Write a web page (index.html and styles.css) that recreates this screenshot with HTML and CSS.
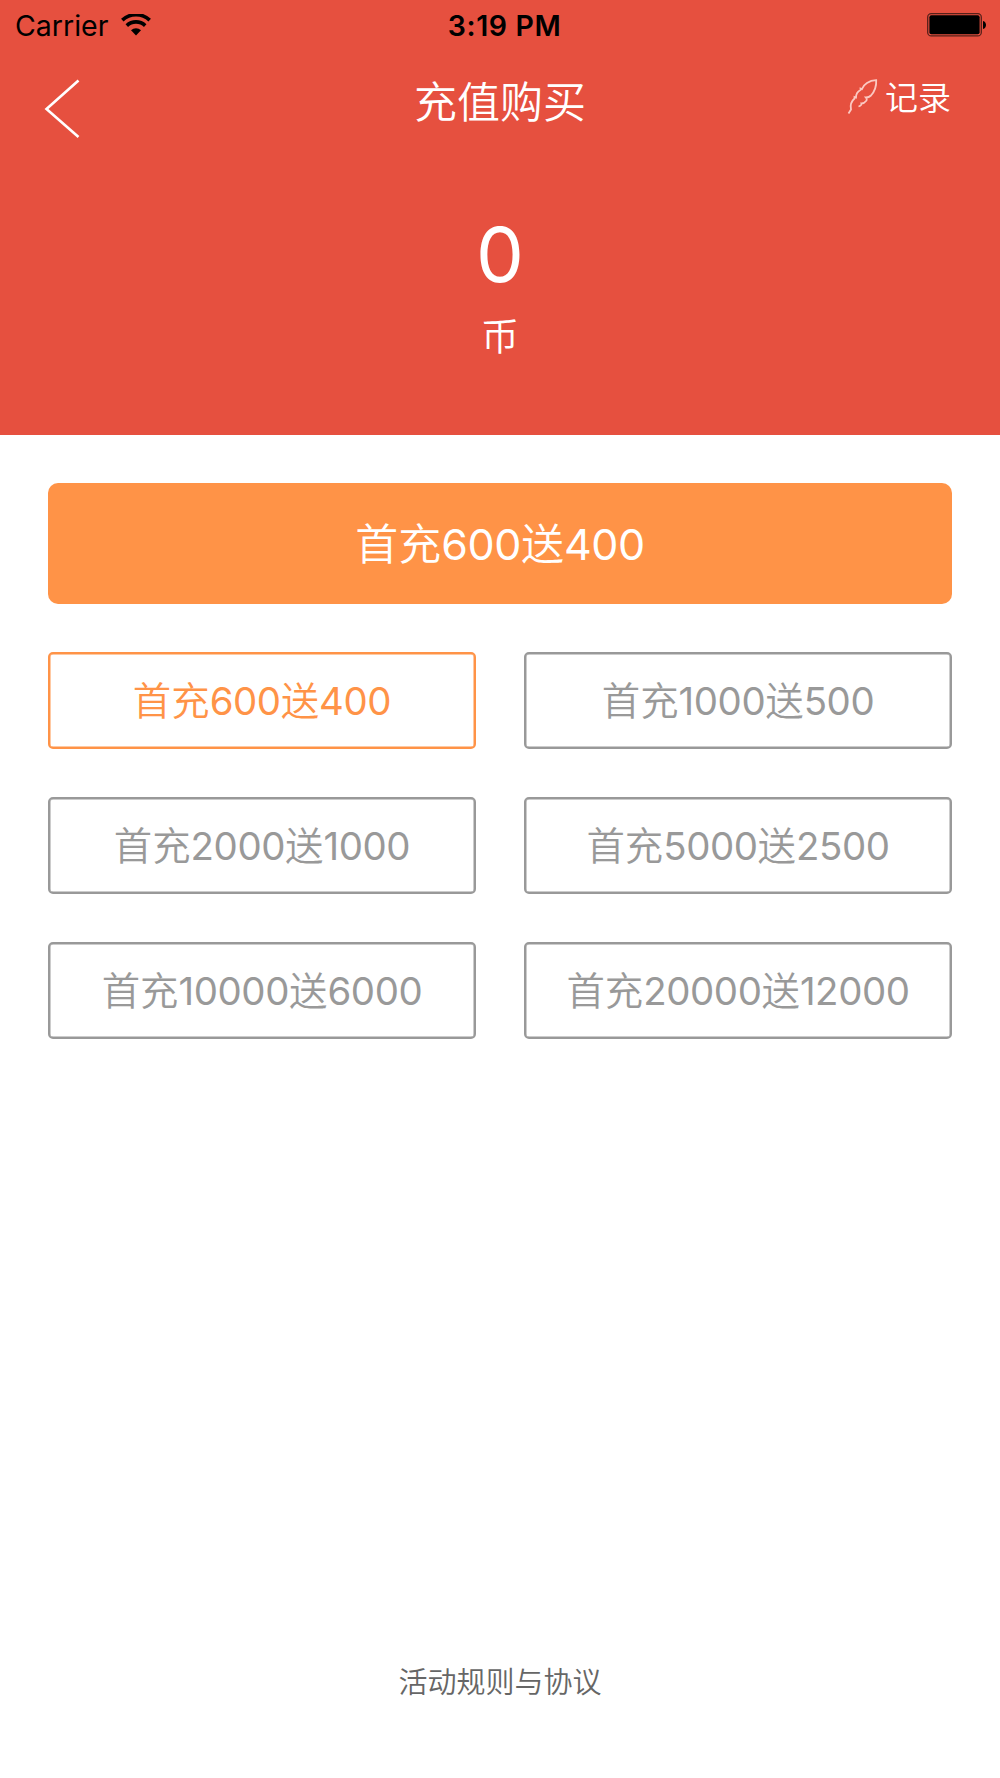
FILE: index.html
```html
<!DOCTYPE html>
<html lang="zh-CN">
<head>
  <meta charset="UTF-8">
  <meta name="viewport" content="width=device-width, initial-scale=1.0">
  <title>充值购买</title>
  <link rel="stylesheet" href="styles.css">
</head>
<body>
  <header class="header">
    <!-- Status bar -->
    <div class="status-bar">
      <div class="carrier">
        <span>Carrier</span>
        <svg class="wifi" width="30" height="22" viewBox="0 0 30 22">
          <path d="M1.3 6.1a20 20 0 0 1 27.4 0" fill="none" stroke="#000" stroke-width="3.6"/>
          <path d="M5.8 11.6a13.3 13.3 0 0 1 18.4 0" fill="none" stroke="#000" stroke-width="3.6"/>
          <path d="M10 16.2a7.2 7.2 0 0 1 10 0L15 21.4z"/>
        </svg>
      </div>
      <div class="time">3:19 PM</div>
      <svg class="battery" width="60" height="24" viewBox="0 0 60 24">
        <rect x=".7" y=".7" width="53.6" height="22.2" rx="3.5" fill="none" stroke="#56201a" stroke-width="1.3"/>
        <rect x="2.4" y="2.3" width="50.2" height="19" rx="2"/>
        <path d="M56 8c4 .8 4 7.2 0 8z"/>
      </svg>
    </div>
    <!-- Navigation -->
    <nav class="nav">
      <a class="back" href="#">
        <svg width="36" height="60" viewBox="0 0 36 60">
          <path d="M34.5 1.5L2.5 30l32 28" fill="none" stroke="#fff" stroke-width="2.6"/>
        </svg>
      </a>
      <h1 class="title">充值购买</h1>
      <a class="record" href="#">
        <svg class="feather" width="32" height="36" viewBox="0 0 32 36">
          <path d="M1.5 34.5L4 30.500C3 26 3.500 23 7.500 19.500v-1.500l1.500.5C9 15 10.500 12.500 13.500 11V9.500l1.500.5C16.500 5.500 22 1.500 29.200 1.200 29.500 7 27.500 12.500 24 16.500c-1.500 1.500-3 2-5 2 1 1 1 2 .5 3-1.500 2-3 3-5 3 .5 1-1 2.500-3 3"/>
        </svg>
        <span>记录</span>
      </a>
    </nav>
    <!-- Balance -->
    <div class="balance">0</div>
    <div class="unit">币</div>
  </header>
  <main class="content">
    <button class="pay-btn">首充<span class="num">600</span>送<span class="num">400</span></button>
    <div class="options">
      <button class="option active">首充<span class="num">600</span>送<span class="num">400</span></button>
      <button class="option">首充<span class="num">1000</span>送<span class="num">500</span></button>
      <button class="option">首充<span class="num">2000</span>送<span class="num">1000</span></button>
      <button class="option">首充<span class="num">5000</span>送<span class="num">2500</span></button>
      <button class="option">首充<span class="num">10000</span>送<span class="num">6000</span></button>
      <button class="option">首充<span class="num">20000</span>送<span class="num">12000</span></button>
    </div>
  </main>
  <footer class="footer">
    <a class="rules" href="#">活动规则与协议</a>
  </footer>
</body>
</html>
```
FILE: styles.css
```css
* {
  margin: 0;
  padding: 0;
  box-sizing: border-box;
}
body {
  display: flex;
  flex-direction: column;
  height: 1778px;
  background-color: #fff;
  font-family: Inter, "Noto Sans CJK SC", sans-serif;
  font-weight: 350;
  overflow: hidden;
}
a {
  color: inherit;
  text-decoration: none;
}
svg {
  display: block;
}
.header {
  height: 435px;
  background-color: #e6503f;
  color: #fff;
}
/* Status bar */
.status-bar {
  display: grid;
  grid-template-columns: 1fr auto 1fr;
  align-items: center;
  height: 48px;
  padding: 2px 13px 0 15px;
  color: #000;
  font-size: 28.5px;
  font-weight: 400;
}
.carrier {
  display: flex;
  align-items: center;
  gap: 13px;
}
.time {
  padding-left: 7px;
  font-weight: 600;
  letter-spacing: 0.6px;
}
.battery {
  justify-self: end;
}
/* Navigation */
.nav {
  display: grid;
  grid-template-columns: 1fr auto 1fr;
  height: 106px;
  padding: 0 49px 0 44px;
}
.back {
  padding-top: 31px;
}
.title {
  padding: 22px 0 0 5px;
  font-size: 43px;
  font-weight: 350;
  line-height: 64px;
}
.record {
  display: flex;
  justify-content: flex-end;
  gap: 6px;
  padding-top: 26px;
  font-size: 33px;
  line-height: 48px;
}
.feather {
  margin-top: 5px;
  fill: none;
  stroke: #fbc9c2;
  stroke-width: 1.8;
}
/* Balance */
.balance {
  margin-top: 54px;
  font-size: 76px;
  font-weight: 400;
  line-height: 92px;
  text-align: center;
}
.unit {
  margin-top: 8px;
  font-size: 38px;
  line-height: 56px;
  text-align: center;
}
/* Amounts */
.content {
  display: flex;
  flex-direction: column;
  gap: 48px;
  padding: 48px 48px 0;
}
.pay-btn {
  height: 121px;
  padding-bottom: 5px;
  border: none;
  border-radius: 10px;
  background-color: #ff9347;
  color: #fff;
  font-family: inherit;
  font-size: 43px;
  font-weight: 350;
}
.num {
  font-weight: 400;
  letter-spacing: -0.4px;
}
.options {
  display: grid;
  grid-template-columns: 1fr 1fr;
  gap: 48px;
}
.option {
  height: 97px;
  padding-bottom: 5px;
  border: 2px solid #999;
  border-radius: 5px;
  box-shadow: inset 0 0 0 0.5px #999;
  background-color: #fff;
  color: #999;
  font-family: inherit;
  font-size: 38.4px;
  font-weight: 350;
}
.option.active {
  border-color: #ff9347;
  box-shadow: inset 0 0 0 0.5px #ff9347;
  color: #ff9347;
}
/* Footer */
.footer {
  margin-top: auto;
  padding-bottom: 73px;
  color: #666;
  font-size: 29px;
  line-height: 44px;
  text-align: center;
}
```
